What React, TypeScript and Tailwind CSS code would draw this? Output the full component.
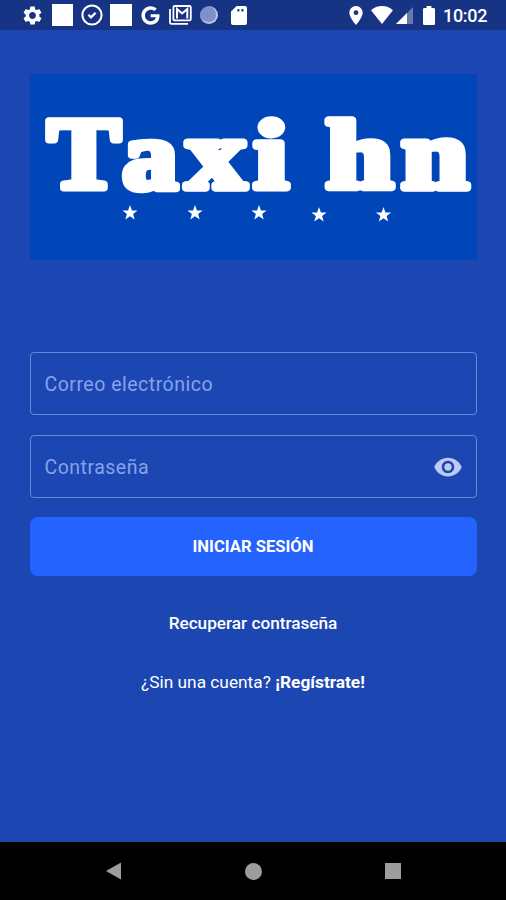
import React, { useState } from 'react';
import { FaGoogle } from 'react-icons/fa';
import { MdBatteryFull, MdPlace, MdSettings, MdVisibility } from 'react-icons/md';

const STAR = 'M0 -8 L1.9 -2.5 L7.6 -2.5 L3.1 0.9 L4.7 6.5 L0 3.2 L-4.7 6.5 L-3.1 0.9 L-7.6 -2.5 L-1.9 -2.5 Z';

const STARS = [
    { x: 100, y: 139 },
    { x: 165, y: 139 },
    { x: 229, y: 139 },
    { x: 289, y: 141 },
    { x: 353.5, y: 141 },
];

const LETTERS = [
    { char: 'T', x: 17.5, width: 73, size: 101 },
    { char: 'a', x: 92.5, width: 55, size: 98 },
    { char: 'x', x: 156, width: 60, size: 99 },
    { char: 'i', x: 224, width: 34, size: 98 },
    { char: 'h', x: 296, width: 67, size: 98 },
    { char: 'n', x: 371.5, width: 67, size: 99 },
];

const CheckCircleIcon = () => (
    <svg className="w-[22px] h-[22px]" viewBox="0 0 22 22" fill="none" stroke="currentColor" strokeWidth="2">
        <circle cx="11" cy="11" r="9.6" />
        <path d="M7.4 10.8l2.6 2.6 4.6-4.6" strokeWidth="2.3" />
    </svg>
);

const MailStackIcon = () => (
    <svg className="w-[23px] h-[20px]" viewBox="0 0 23 20" fill="none" stroke="currentColor">
        <path d="M1 4v13.2a1.6 1.6 0 0 0 1.6 1.6H19" strokeWidth="1.8" />
        <rect x="4.4" y="1" width="17.4" height="14.4" rx="1.4" strokeWidth="1.8" />
        <path d="M8 13.6V4l5.1 4.4L18.3 4v9.6" strokeWidth="2" />
    </svg>
);

const SdIcon = () => (
    <svg className="w-4 h-[19px]" viewBox="0 0 16 19" fill="currentColor" fillRule="evenodd">
        <path d="M5.6 0H14a2 2 0 0 1 2 2v15a2 2 0 0 1-2 2H2a2 2 0 0 1-2-2V5.6ZM6.4 3v2.6h2V3ZM10.4 3v2.6h2V3Z" />
    </svg>
);

const WifiIcon = () => (
    <svg className="w-[22px] h-[18px]" viewBox="0 0 22 18" fill="currentColor">
        <path d="M11 18L0 4.2C3 1.6 6.8 0 11 0s8 1.6 11 4.2Z" />
    </svg>
);

const SignalIcon = () => (
    <svg className="w-[17px] h-[17px]" viewBox="0 0 17 17" fill="currentColor">
        <path d="M0 17L17 0v17Z" opacity="0.35" />
        <path d="M0 17L11 6v11Z" />
    </svg>
);

const StatusBar = () => (
    <header className="h-[30px] shrink-0 flex items-center justify-between pl-[23px] pr-[18px] bg-[#163384] text-white">
        <div className="flex items-center">
            <MdSettings viewBox="2 2 20 20" className="w-[19px] h-[19px]" />
            <span className="w-[21px] h-[22px] ml-[10px] bg-white" />
            <span className="ml-2"><CheckCircleIcon /></span>
            <span className="w-[22px] h-[22px] ml-[7px] bg-white" />
            <FaGoogle className="w-[19px] h-[19px] ml-[9px]" />
            <span className="ml-[9px]"><MailStackIcon /></span>
            <span className="w-[18px] h-[18px] ml-2 rounded-full bg-[#7d92cb] border-r-2 border-b-2 border-[#b8c6ea]" />
            <span className="ml-[13px]"><SdIcon /></span>
        </div>
        <div className="flex items-center">
            <MdPlace viewBox="5 2 14 20" className="w-[14px] h-[19px]" />
            <span className="ml-2"><WifiIcon /></span>
            <span className="ml-[3px]"><SignalIcon /></span>
            <MdBatteryFull viewBox="7 2 10 20" preserveAspectRatio="none" className="w-3 h-[19px] ml-[10px]" />
            <span className="ml-2 w-[45px] text-[18px] leading-none font-medium whitespace-nowrap tracking-[-0.3px] pt-0.5">10:02</span>
        </div>
    </header>
);

const Logo = () => (
    <svg className="block w-full h-[186px] bg-[#0046b8]" viewBox="0 0 447 186" fill="white">
        <g
            fontFamily="'Liberation Serif', serif"
            fontWeight="bold"
            stroke="white"
            strokeWidth="7.5"
            strokeLinejoin="round"
        >
            {LETTERS.map(l => (
                <text key={l.char} x={l.x} y="113.5" fontSize={l.size} textLength={l.width} lengthAdjust="spacingAndGlyphs">
                    {l.char}
                </text>
            ))}
        </g>
        {STARS.map(s => (
            <path key={s.x} d={STAR} transform={`translate(${s.x} ${s.y})`} />
        ))}
    </svg>
);

interface FieldProps {
    type: string;
    placeholder: string;
    children?: React.ReactNode;
}

const Field: React.FC<FieldProps> = ({ type, placeholder, children }) => (
    <label className="h-[63px] flex items-center px-[14px] border border-[#6b88d6] rounded-[4px]">
        <input
            type={type}
            placeholder={placeholder}
            className="flex-1 min-w-0 pt-0.5 bg-transparent outline-none text-white text-[19.5px] tracking-[0.5px] placeholder:text-[#86a3ea]"
        />
        {children}
    </label>
);

const NavBar = () => (
    <nav className="h-[58px] shrink-0 flex items-center justify-between pl-[106px] pr-[105px] bg-black text-[#9d9d9d]">
        <svg className="w-4 h-[18px]" viewBox="0 0 16 18" fill="currentColor">
            <path d="M0 9L15 0.5v17Z" />
        </svg>
        <span className="w-[17px] h-[17px] rounded-full bg-[#9d9d9d]" />
        <span className="w-4 h-4 bg-[#9d9d9d]" />
    </nav>
);

export default function App() {
    const [visible, setVisible] = useState(false);

    return (
        <div className="w-full h-[900px] flex flex-col bg-[#1c46b2] text-white font-['Roboto',sans-serif]">
            <StatusBar />
            <main className="flex-1 flex flex-col px-[29.5px] pt-11">
                <Logo />
                <form className="flex flex-col mt-[92px]" onSubmit={e => e.preventDefault()}>
                    <div className="flex flex-col gap-5">
                        <Field type="email" placeholder="Correo electrónico" />
                        <Field type={visible ? 'text' : 'password'} placeholder="Contraseña">
                            <button type="button" onClick={() => setVisible(!visible)}>
                                <MdVisibility viewBox="1 4 22 16" className="w-7 h-5 text-[#bccbf2]" />
                            </button>
                        </Field>
                    </div>
                    <button type="submit" className="h-[59px] mt-[19px] pt-0.5 rounded-lg bg-[#2563ff] text-[16.6px] font-bold">
                        INICIAR SESIÓN
                    </button>
                </form>
                <a className="mt-[35px] text-center text-[17.2px] leading-6 font-medium">Recuperar contraseña</a>
                <p className="mt-[35px] text-center text-[17.3px] leading-6">
                    ¿Sin una cuenta? <a className="font-bold">¡Regístrate!</a>
                </p>
            </main>
            <NavBar />
        </div>
    );
}
